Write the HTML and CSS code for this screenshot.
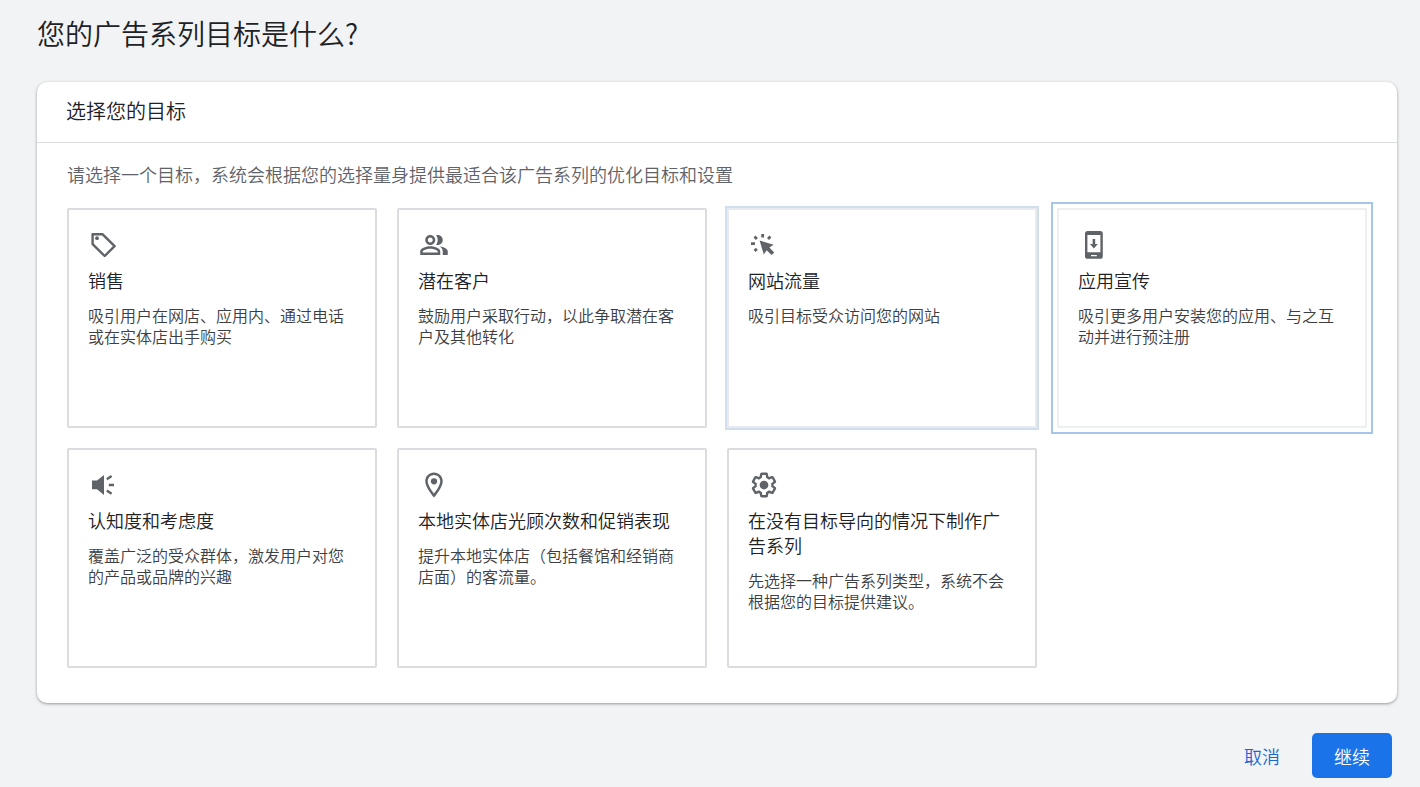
FILE: index.html
```html
<!DOCTYPE html>
<html lang="zh-CN">
<head>
  <meta charset="UTF-8">
  <meta name="viewport" content="width=device-width, initial-scale=1">
  <title>您的广告系列目标是什么?</title>
  <link rel="stylesheet" href="styles.css">
</head>
<body>
  <h1>您的广告系列目标是什么?</h1>

  <main class="panel">
    <h2>选择您的目标</h2>
    <div class="panel-body">
      <p class="hint">请选择一个目标，系统会根据您的选择量身提供最适合该广告系列的优化目标和设置</p>

      <div class="goals">
        <!-- Sales -->
        <button type="button" class="goal">
          <svg class="icon" viewBox="0 0 30 30"><path d="M3.6 4.2H13.4L25.6 16.2 15.7 26 3.6 14.2z" fill="none" stroke="currentColor" stroke-width="2.4" stroke-linejoin="round"/><circle cx="8" cy="8.2" r="1.9"/></svg>
          <span class="goal-title">销售</span>
          <span class="goal-text">吸引用户在网店、应用内、通过电话或在实体店出手购买</span>
        </button>

        <!-- Leads -->
        <button type="button" class="goal">
          <svg class="icon" viewBox="0 0 24 24"><path d="M16.67 13.13C18.04 14.06 19 15.32 19 17v3h4v-3c0-2.18-3.57-3.47-6.33-3.87zM15 12c2.21 0 4-1.79 4-4s-1.79-4-4-4c-.47 0-.91.1-1.33.24C14.5 5.27 15 6.58 15 8s-.5 2.73-1.33 3.76c.42.14.86.24 1.33.24zM9 12c2.21 0 4-1.79 4-4s-1.79-4-4-4-4 1.79-4 4 1.79 4 4 4zm0-6c1.1 0 2 .9 2 2s-.9 2-2 2-2-.9-2-2 .9-2 2-2zM9 13c-2.67 0-8 1.34-8 4v3h16v-3c0-2.66-5.33-4-8-4zm6 5H3v-.99C3.2 16.29 6.3 15 9 15s5.8 1.29 6 2v1z"/></svg>
          <span class="goal-title">潜在客户</span>
          <span class="goal-text">鼓励用户采取行动，以此争取潜在客户及其他转化</span>
        </button>

        <!-- Website traffic -->
        <button type="button" class="goal hovered">
          <svg class="icon" viewBox="0 0 30 30"><path d="M10.6 10.4L24.6 14.8 20.4 17.4 25.2 22.4 22.6 25 17.6 20.2 14.8 24.4z"/><path d="M13.7 4v3.4M5.5 6.5L7.9 8.9M21.4 6.5L19 8.9M2 13.6H6M5.5 20.9L7.9 18.9" fill="none" stroke="currentColor" stroke-width="2.8"/></svg>
          <span class="goal-title">网站流量</span>
          <span class="goal-text">吸引目标受众访问您的网站</span>
        </button>

        <!-- App promotion -->
        <button type="button" class="goal focused">
          <svg class="icon" viewBox="0 0 30 30"><path fill-rule="evenodd" d="M8.6 1H21.2Q23.8 1 23.8 3.6V26.2Q23.8 28.8 21.2 28.8H8.6Q6 28.8 6 26.2V3.6Q6 1 8.6 1zM8.4 5V22.2H21.4V5zM12 25V26.2H17.8V25z"/><path d="M13.6 9H16.2V14H18.8L14.9 18.4 11 14H13.6z"/></svg>
          <span class="goal-title">应用宣传</span>
          <span class="goal-text">吸引更多用户安装您的应用、与之互动并进行预注册</span>
        </button>

        <!-- Awareness -->
        <button type="button" class="goal">
          <svg class="icon" viewBox="0 0 30 30"><path d="M3 10.6H8L15 5V25L8 19.2H3z"/><path d="M17.8 9.2L22.6 6M19.8 15H25M17.8 20.6L22.6 23.8" fill="none" stroke="currentColor" stroke-width="2.4"/></svg>
          <span class="goal-title">认知度和考虑度</span>
          <span class="goal-text">覆盖广泛的受众群体，激发用户对您的产品或品牌的兴趣</span>
        </button>

        <!-- Local store visits -->
        <button type="button" class="goal">
          <svg class="icon" viewBox="0 0 24 24"><path d="M12 2C8.13 2 5 5.13 5 9c0 5.25 7 13 7 13s7-7.75 7-13c0-3.87-3.13-7-7-7zM7 9c0-2.76 2.24-5 5-5s5 2.24 5 5c0 2.88-2.88 7.19-5 9.88C9.92 16.21 7 11.85 7 9z"/><circle cx="12" cy="9" r="2.5"/></svg>
          <span class="goal-title">本地实体店光顾次数和促销表现</span>
          <span class="goal-text">提升本地实体店（包括餐馆和经销商店面）的客流量。</span>
        </button>

        <!-- No goal -->
        <button type="button" class="goal">
          <svg class="icon" viewBox="0 0 24 24"><path transform="translate(1.2 1.2) scale(.9)" fill="none" stroke="currentColor" stroke-width="2.1" d="M19.43 12.98c.04-.32.07-.64.07-.98 0-.34-.03-.66-.07-.98l2.11-1.65c.19-.15.24-.42.12-.64l-2-3.46c-.09-.16-.26-.25-.44-.25-.06 0-.12.01-.17.03l-2.49 1c-.52-.4-1.08-.73-1.69-.98l-.38-2.65C14.46 2.18 14.25 2 14 2h-4c-.25 0-.46.18-.49.42l-.38 2.65c-.61.25-1.17.59-1.69.98l-2.49-1c-.06-.02-.12-.03-.18-.03-.17 0-.34.09-.43.25l-2 3.46c-.13.22-.07.49.12.64l2.11 1.65c-.04.32-.07.65-.07.98 0 .33.03.66.07.98l-2.11 1.65c-.19.15-.24.42-.12.64l2 3.46c.09.16.26.25.44.25.06 0 .12-.01.17-.03l2.49-1c.52.4 1.08.73 1.69.98l.38 2.65c.03.24.24.42.49.42h4c.25 0 .46-.18.49-.42l.38-2.65c.61-.25 1.17-.59 1.69-.98l2.49 1c.06.02.12.03.18.03.17 0 .34-.09.43-.25l2-3.46c.12-.22.07-.49-.12-.64l-2.11-1.65z"/><circle cx="12" cy="12" r="3.5"/></svg>
          <span class="goal-title">在没有目标导向的情况下制作广告系列</span>
          <span class="goal-text">先选择一种广告系列类型，系统不会根据您的目标提供建议。</span>
        </button>
      </div>
    </div>
  </main>

  <footer class="actions">
    <button type="button" class="btn">取消</button>
    <button type="button" class="btn primary">继续</button>
  </footer>
</body>
</html>
```
FILE: styles.css
```css
* {box-sizing:border-box;}
body {margin:0; padding:15px 23px 9px 37px; background:#f1f3f4; color:#202124; font-family:"Noto Sans CJK SC", sans-serif; font-weight:350;}
h1 {margin:0 0 31px; font-size:28px; line-height:36px; font-weight:350;}
button {font-family:inherit; font-weight:inherit; cursor:pointer;}

.panel {background:#fff; border-radius:10px; box-shadow:0 1px 3px rgba(60,64,67,.5);}
.panel h2 {margin:0; padding:14px 29px 16px; border-bottom:1px solid #dadce0; font-size:20px; line-height:30px; font-weight:350;}
.panel-body {padding:19px 30px 35px;}
.hint {margin:0 0 22px; font-size:18px; line-height:24px; color:#5f6368;}

/* Goal cards */
.goals {display:grid; grid-template-columns:repeat(4, 1fr); gap:20px;}
.goal {display:flex; flex-direction:column; align-items:flex-start; justify-content:flex-start; min-height:220px; padding:20px 19px; border:2px solid #dadce0; border-radius:2px; background:#fff; text-align:left;}
.goal.hovered {border-color:#e8eaf0; border-radius:0; outline:2px solid #d0deee;}
.goal.focused {border-color:#eeeff0; border-radius:0; outline:2px solid #a5c6e8; outline-offset:4px;}
.icon {width:30px; height:30px; flex:none; margin:0 0 8px 1px; fill:currentColor; color:#5f6368;}
.goal-title {margin-bottom:12px; font-size:18px; line-height:25px; color:#202124;}
.goal-text {font-size:16px; line-height:21px; color:#3c4043;}

/* Footer buttons */
.actions {display:flex; justify-content:flex-end; gap:10px; margin-top:30px; padding-right:5px;}
.btn {height:45px; padding:0 22px; border:0; border-radius:5px; background:none; color:#1967d2; font-size:18px;}
.btn.primary {background:#1a73e8; color:#fff;}
```
